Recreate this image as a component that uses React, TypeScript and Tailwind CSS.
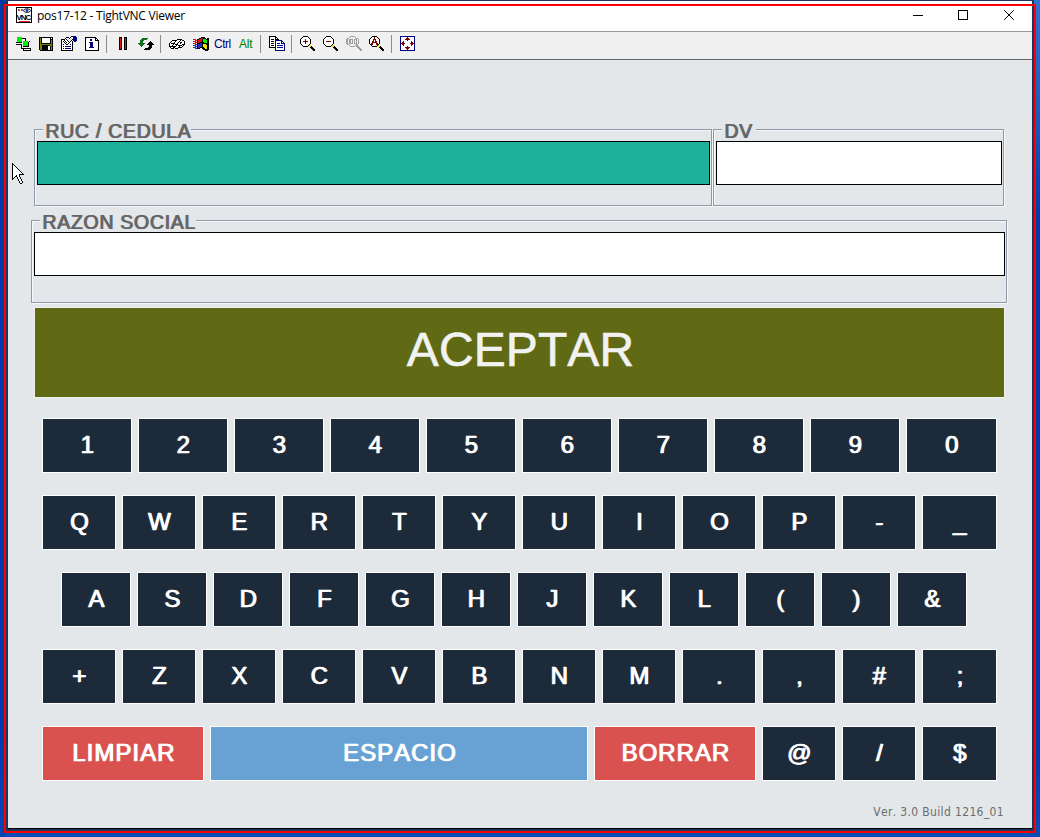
import React from "react";

const COLORS: Record<string, string> = {
  k: "#000000",
  w: "#ffffff",
  g: "#00f000",
  G: "#107020",
  n: "#000080",
  r: "#e01010",
  R: "#800000",
  y: "#f0e000",
  o: "#808000",
  s: "#a0a0a0",
  l: "#c8c8c8",
  b: "#2030b0",
};

function PixelIcon({ rows, className = "" }: { rows: string[]; className?: string }) {
  const width = rows.reduce((m, r) => Math.max(m, r.length), 0);
  return (
    <svg
      width={width}
      height={rows.length}
      viewBox={`0 0 ${width} ${rows.length}`}
      shapeRendering="crispEdges"
      className={`shrink-0 ${className}`}
    >
      {rows.flatMap((row, y) =>
        row.split("").map((c, x) =>
          COLORS[c] ? <rect key={`${x}-${y}`} x={x} y={y} width={1} height={1} fill={COLORS[c]} /> : null
        )
      )}
    </svg>
  );
}

const CONNECT = [
  ".ggggg..........",
  ".gggggkkkk......",
  ".ggggg...k......",
  ".ggggg...k......",
  ".ggggg.ggggg.k..",
  "kkkkkk.gggggk...",
  "..ww...gggggk...",
  "kkkkkk.gggggk...",
  ".....k.gggggk...",
  ".....k.kkkkkk...",
  ".....k..www.....",
  ".....kkkkkkkkkk.",
  ".......kwwwwwwk.",
  ".......kkkkkkkk.",
];

const SAVE = [
  "kkkkkkkkkkkkkk",
  "kokwwwwwwwwkwk",
  "kokwwwwwwwwkkk",
  "kokwwwwwwwwkok",
  "kokwwwwwwwwkok",
  "kokwwwwwwwwkok",
  "kokkkkkkkkkkok",
  "kooooooooooook",
  "kookkkkkkkkook",
  "kookkkkkkwwkok",
  "kookkkkkkwwkok",
  "kookkkkkkwwkok",
  "kookkkkkkwwkok",
  ".kkkkkkkkkkkkk",
];

const PROPS = [
  "..........nnnnn.",
  ".....kkk.kwwnnnn",
  "....kwlwkwlwnnnn",
  "kkkkwkwlwlwknnnn",
  "kwwkwwkwlwkwnnnn",
  "kwkwkwwkwkwk.nn.",
  "kwwkwkwwkwwk....",
  "kwwwkwwkwwwk....",
  "kwnwwkkwwnwk....",
  "kwwwwwwwwwwk....",
  "kwnwnnnnnnwk....",
  "kwwwwwwwwwwk....",
  "kwnwnnnnnnwk....",
  "kwwwwwwwwwwk....",
  "kkkkkkkkkkkk....",
];

const INFO = [
  "kkkkkkkkkkk...",
  "kwwwwwwwwwkk..",
  "kwwwwnnwwwkwk.",
  "kwwwwnnwwwkkkk",
  "kwwwwwwwwwwwwk",
  "kwwwnnnnwwwwwk",
  "kwwwwnnnwwwwwk",
  "kwwwwnnnwwwwwk",
  "kwwwwnnnwwwwwk",
  "kwwwwnnnwwwwwk",
  "kwwwnnnnnwwwwk",
  "kwwwwwwwwwwwwk",
  "kwwwwwwwwwwwwk",
  "kkkkkkkkkkkkkk",
];

const PAUSE = ["kkk..kkk", ...Array<string>(11).fill("krk..krk"), "kkk..kkk"];

const REFRESH = [
  "....GGGGGG......",
  "...GGGGGG.......",
  "..GGGG..........",
  "..GGG.......k...",
  "..GGG......kkk..",
  "GGGGGGG...kkkkk.",
  ".GGGGG...kkkkkkk",
  "..GGG......kkk..",
  "...G.......kkk..",
  "..........kkkk..",
  ".......kkkkkk...",
  "......kkkkkk....",
];

const KEYS = [
  "........kkkkk...",
  "...kkkkkwwwkwkk.",
  "..kwwwkwwwkwwwwk",
  ".kwwwkwwwkwkkwwk",
  "kwkkkkwwkwwkwwwk",
  "kwwwkwkkkwwwwkkk",
  "kwwkwwwkwkkkkwk.",
  "kkkkkkkwwwkwwk..",
  ".kwwkkwwwkkkk...",
  "..kkk.kkk.......",
];

const WINDOWS = [
  "........kkkk....",
  "......kkrrkkk.kk",
  "rrr.kkrrrkgggkkk",
  "..rrkrrrrkggggkk",
  "rrr.krrrrkggggkk",
  "..rrkrrkkkkgggkk",
  "rrr.kkkbbkkkkkkk",
  "..bbkbbbbkyyykkk",
  "bbb.kbbbbkyyyykk",
  "..bbkbbbbkyyyykk",
  "bbb.kbbkkkkyyykk",
  "..bbkkk..kkkyykk",
  "..........kkkkkk",
  "............kkk.",
];

const COPY = [
  "kkkkkkk.........",
  "kwwwwwkk........",
  "kwwwwwkwk.......",
  "kwkkkwkkkk......",
  "kwwwwwnnnnnnn...",
  "kwkkkwnwwwwwnn..",
  "kwwwwwnwwwwwnwn.",
  "kwkkkwnwnnnwnnnn",
  "kwwwwwnwwwwwwwwn",
  "kwkkkwnwnnnnnnwn",
  "kwwwwwnwwwwwwwwn",
  "kkkkkknwnnnnnnwn",
  "......nwwwwwwwwn",
  "......nwwwwwwwwn",
  "......nnnnnnnnnn",
];

const ZOOM_IN = [
  "...kkkkk.......",
  "..kwwwwwk......",
  ".kwwwwwwwk.....",
  "kwwwwRwwwwk....",
  "kwwwwRwwwwk....",
  "kwwRRRRRwwk....",
  "kwwwwRwwwwk....",
  "kwwwwRwwwwk....",
  ".kwwwwwwwk.....",
  "..kwwwwwkyy....",
  "...kkkkk.yyk...",
  "..........kkk..",
  "...........kkk.",
  "............kkk",
  ".............kk",
];

const ZOOM_OUT = ZOOM_IN.map((r, i) =>
  i === 3 || i === 4 || i === 6 || i === 7 ? r.split("R").join("w") : r
);

const ZOOM_100 = [
  "....sssss.......",
  "...s.....s......",
  ".ss.......ss....",
  "ss.ssss.sss.s...",
  "ss.ss.s.s.s.s...",
  "ss.ss.s.s.s.s...",
  "ss.ss.s.s.s.s...",
  "ss.ssss.sss.s...",
  ".ss.......ss....",
  "...s.....sss....",
  "....sssss.sss...",
  "...........sss..",
  "............sss.",
  ".............sss",
  "..............ss",
];

const ZOOM_AUTO = [
  "...kkkkk.......",
  "..kwwRwwk......",
  ".kwwwRwwwk.....",
  "kwwwRRRwwwk....",
  "kwwwRwRwwwk....",
  "kwwRRwRRwwk....",
  "kwwRRRRRwwk....",
  "kwRRwwwRRwk....",
  ".kRRwwwRRk.....",
  "..kwwwwwkyy....",
  "...kkkkk.yyk...",
  "..........kkk..",
  "...........kkk.",
  "............kkk",
  ".............kk",
];

const FULL = [
  "nnnnnnnnnnnnnnn",
  "nwwwwwwRwwwwwwn",
  "nwwwwwRRRwwwwwn",
  "nwwwwRRRRRwwwwn",
  "nwwwwwwRwwwwwwn",
  "nwwRwwwwwwwRwwn",
  "nwRRwwwwwwwRRwn",
  "nRRRRwwwwwRRRRn",
  "nwRRwwwwwwwRRwn",
  "nwwRwwwwwwwRwwn",
  "nwwwwwwRwwwwwwn",
  "nwwwwRRRRRwwwwn",
  "nwwwwwRRRwwwwwn",
  "nwwwwwwRwwwwwwn",
  "nnnnnnnnnnnnnnn",
];

const CURSOR = [
  "k...........",
  "kk..........",
  "kwk.........",
  "kwwk........",
  "kwwwk.......",
  "kwwwwk......",
  "kwwwwwk.....",
  "kwwwwwwk....",
  "kwwwwwwwk...",
  "kwwwwwwwwk..",
  "kwwwwwwwwwk.",
  "kwwwwwwkkkkk",
  "kwwwkwwk....",
  "kwwkkwwk....",
  "kwk..kwwk...",
  "kk...kwwk...",
  "k.....kwwk..",
  "......kwwk..",
  ".......kwwk.",
  ".......kwwk.",
  "........kk..",
];

function Separator({ className = "" }: { className?: string }) {
  return <div className={`h-[18px] w-px shrink-0 bg-[#8c8c8c] ${className}`} />;
}

function TitleBar() {
  return (
    <header className="flex h-[30px] shrink-0 bg-white pl-2">
      <svg width="16" height="17" viewBox="0 0 16 17" className="mt-[6px] shrink-0">
        <rect x="0.5" y="0.5" width="15" height="15" fill="#fff" stroke="#000" />
        <path d="M2 2l2 2M4 2l-2 2M5 2l2 2M7 2l-2 2" stroke="#803030" strokeWidth="0.8" />
        <ellipse cx="11" cy="3.6" rx="3.4" ry="1.8" fill="#fff" stroke="#000" strokeWidth="0.9" />
        <circle cx="11" cy="3.6" r="1.3" fill="#0030c0" />
        <text x="0.4" y="12.6" fontFamily="Liberation Sans" fontWeight="700" fontSize="8" textLength="15">
          VNC
        </text>
        <path d="M3 14.5h11" stroke="#e02020" />
      </svg>
      <h1 className="mt-[6px] ml-[5px] w-[160px] font-['Open_Sans',sans-serif] text-[12px] leading-[18px] tracking-[-0.24px] whitespace-nowrap text-black">
        pos17-12 - TightVNC Viewer
      </h1>
      <div className="mr-[17px] ml-auto flex">
        <svg width="102" height="11" viewBox="0 0 102 11" fill="none" stroke="#000" className="mt-[9px]">
          <path d="M0 5.5h10" shapeRendering="crispEdges" />
          <rect x="45.5" y="0.5" width="9" height="9" shapeRendering="crispEdges" />
          <path d="M91.2 0.2l9.6 9.6M100.8 0.2l-9.6 9.6" />
        </svg>
      </div>
    </header>
  );
}

function Toolbar() {
  return (
    <div className="flex h-[29px] shrink-0 items-start border-t border-b border-t-[#999] border-b-[#666] bg-[#f0f0f0] pt-[5px] pl-2">
      <PixelIcon rows={CONNECT} />
      <PixelIcon rows={SAVE} className="ml-[7px]" />
      <PixelIcon rows={PROPS} className="-mt-px ml-2" />
      <PixelIcon rows={INFO} className="ml-2" />
      <Separator className="-mt-[2px] ml-[7px]" />
      <PixelIcon rows={PAUSE} className="ml-3" />
      <PixelIcon rows={REFRESH} className="mt-px ml-[11px]" />
      <Separator className="-mt-[2px] ml-[6px]" />
      <PixelIcon rows={KEYS} className="mt-[2px] ml-2" />
      <PixelIcon rows={WINDOWS} className="ml-2" />
      <span className="ml-[5px] w-[19px] font-['Liberation_Sans',sans-serif] text-[12px] leading-[14px] tracking-[-0.5px] text-[#000080]">
        Ctrl
      </span>
      <span className="ml-[6px] w-[17px] font-['Liberation_Sans',sans-serif] text-[12px] leading-[14px] tracking-[-0.2px] text-[#008000]">
        Alt
      </span>
      <Separator className="-mt-[2px] ml-[4px]" />
      <PixelIcon rows={COPY} className="-mt-px ml-2" />
      <Separator className="-mt-[2px] ml-[6px]" />
      <PixelIcon rows={ZOOM_IN} className="-mt-px ml-2" />
      <PixelIcon rows={ZOOM_OUT} className="-mt-px ml-2" />
      <PixelIcon rows={ZOOM_100} className="-mt-px ml-2" />
      <PixelIcon rows={ZOOM_AUTO} className="-mt-px ml-[7px]" />
      <Separator className="-mt-[2px] ml-[7px]" />
      <PixelIcon rows={FULL} className="-mt-px ml-2" />
    </div>
  );
}

interface FieldProps {
  label: string;
  box: string;
  legend: string;
  input: string;
}

function Field({ label, box, legend, input }: FieldProps) {
  return (
    <div
      className={`shrink-0 border border-[#8e9aa8] shadow-[1px_1px_0_#f6f8f9,inset_1px_1px_0_#f6f8f9] ${box}`}
    >
      <div
        className={`-mt-[9px] ml-2 h-5 bg-[#e3e7ea] pl-[2px] text-[19.5px] leading-[20px] tracking-[0.7px] whitespace-nowrap text-[#666] [-webkit-text-stroke:0.2px_#666] [text-shadow:1px_0_0_#666] ${legend}`}
      >
        {label}
      </div>
      <div className={`ml-[2px] h-[44px] border border-black ${input}`} />
    </div>
  );
}

interface KeyProps {
  label: string;
  className: string;
}

function Key({ label, className }: KeyProps) {
  return (
    <button
      className={`flex h-[55px] shrink-0 items-center justify-center border border-white pb-[2px] pl-px text-[24px] leading-[28px] tracking-[1px] text-white [-webkit-text-stroke:0.35px_#fff] [text-shadow:1px_0_0_#fff] ${className}`}
    >
      {label}
    </button>
  );
}

function KeyRow({ keys, width, className = "" }: { keys: string[]; width: string; className?: string }) {
  return (
    <div className={`flex gap-[6px] ${className}`}>
      {keys.map((k) => (
        <Key key={k} label={k} className={`bg-[#1d2a3a] ${width}`} />
      ))}
    </div>
  );
}

const DARK = "bg-[#1d2a3a]";

export default function App() {
  return (
    <div className="relative h-[837px] w-[1040px] overflow-hidden bg-[linear-gradient(180deg,#2a72d8_0,#1a5cc4_110px,#0038a8_220px,#0038a8_740px,#0a4cb8_837px)] font-['Liberation_Sans',sans-serif] [font-kerning:none]">
      <div className="absolute inset-y-0 left-0 w-[6px] bg-[linear-gradient(180deg,#0039a6,#0038a8_85%,#0646b4)]" />
      <div className="relative ml-[6px] flex h-[831px] w-[1028px] flex-col border-t border-r-2 border-b-2 border-l-2 border-[#1c355e] bg-[#e3e7ea]">
        <TitleBar />
        <Toolbar />
        <main className="flex min-h-0 grow flex-col border-b border-black">
          <div className="mt-[69px] ml-[26px] flex gap-px">
            <Field
              label="RUC / CEDULA"
              box="h-[77px] w-[678px]"
              legend="w-[148px]"
              input="w-[673px] bg-[#1eb09b]"
            />
            <Field label="DV" box="h-[77px] w-[291px]" legend="w-[34px]" input="w-[286px] bg-white" />
          </div>
          <div className="mt-[14px] ml-[23px]">
            <Field label="RAZON SOCIAL" box="h-[83px] w-[976px]" legend="w-[156px]" input="w-[971px] bg-white" />
          </div>
          <button className="mt-1 ml-[26px] flex h-[91px] w-[971px] shrink-0 items-center justify-center border border-[#f0f2f0] bg-[#606a15] pb-[6px] pl-[2px] text-[48px] leading-[56px] tracking-[0.1px] text-[#f2f2f2] [-webkit-text-stroke:0.6px_#f2f2f2]">
            ACEPTAR
          </button>
          <div className="mt-5 ml-[34px] flex flex-col gap-[22px]">
            <KeyRow keys={["1", "2", "3", "4", "5", "6", "7", "8", "9", "0"]} width="w-[90px] last:w-[91px]" />
            <KeyRow
              keys={["Q", "W", "E", "R", "T", "Y", "U", "I", "O", "P", "-", "_"]}
              width="w-[74px] last:w-[75px]"
            />
            <KeyRow
              keys={["A", "S", "D", "F", "G", "H", "J", "K", "L", "(", ")", "&"]}
              width="w-[70px]"
              className="ml-[19px]"
            />
            <KeyRow
              keys={["+", "Z", "X", "C", "V", "B", "N", "M", ".", ",", "#", ";"]}
              width="w-[74px] last:w-[75px]"
            />
            <div className="flex gap-[6px]">
              <Key label="LIMPIAR" className="w-[162px] bg-[#da5250]" />
              <Key label="ESPACIO" className="w-[378px] bg-[#68a2d4]" />
              <Key label="BORRAR" className="w-[162px] bg-[#da5250]" />
              <Key label="@" className={`w-[74px] ${DARK}`} />
              <Key label="/" className={`w-[74px] ${DARK}`} />
              <Key label="$" className={`w-[75px] ${DARK}`} />
            </div>
          </div>
          <footer className="mt-[23px] mr-[28px] text-right font-['DejaVu_Sans_Condensed','DejaVu_Sans',sans-serif] text-[12px] leading-[16px] tracking-[0.35px] whitespace-nowrap text-[#6c6c6c]">
            Ver. 3.0 Build 1216_01
          </footer>
        </main>
      </div>
      <div className="pointer-events-none absolute top-1 left-1 h-[829px] w-[1032px] border-2 border-[#ff0000]" />
      <PixelIcon rows={CURSOR} className="absolute top-[163px] left-[12px]" />
    </div>
  );
}
